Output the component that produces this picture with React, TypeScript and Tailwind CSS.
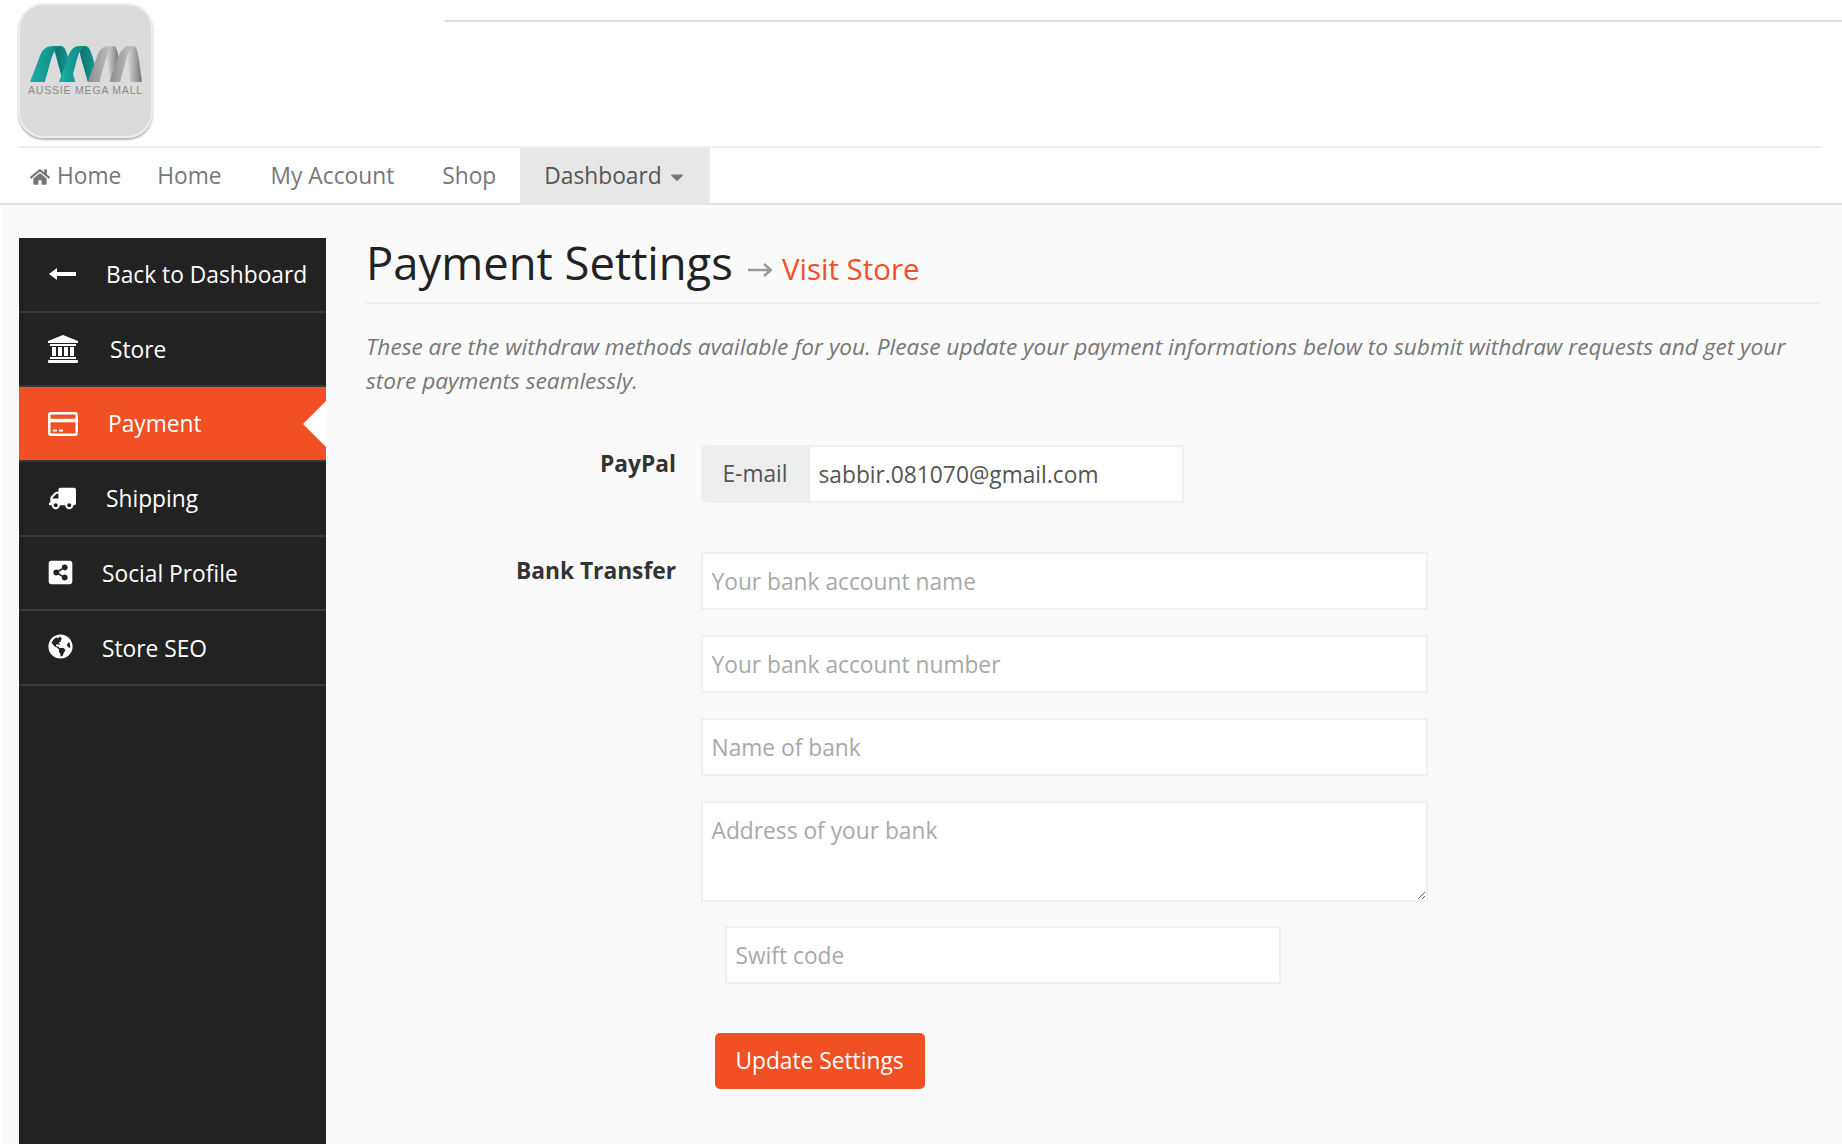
import React from "react";
import {
  FaCaretDown,
  FaGlobeAmericas,
  FaHome,
  FaShareAltSquare,
  FaTruck,
} from "react-icons/fa";

const sans = { fontFamily: '"Open Sans", sans-serif' };

const Logo = () => (
  <div className="w-[135px] h-[135px] rounded-[26px] bg-[#dbdbdb] border-2 border-[#eeeeee] shadow-[0_2px_2px_#b5b5b5] flex flex-col items-center pt-[41px]">
    <svg width="112" height="36" viewBox="0 0 333 107">
      <defs>
        <linearGradient id="teal" x1="0" x2="1" y1="0" y2="0">
          <stop offset="0" stopColor="#1eaea5" />
          <stop offset="1" stopColor="#0b8783" />
        </linearGradient>
        <linearGradient id="tealDark" x1="0" x2="1" y1="0" y2="0">
          <stop offset="0" stopColor="#0a6f6d" />
          <stop offset="1" stopColor="#1aa69e" />
        </linearGradient>
        <linearGradient id="grey" x1="0" x2="1" y1="0" y2="0">
          <stop offset="0" stopColor="#8c8c8c" />
          <stop offset="1" stopColor="#c8c8c8" />
        </linearGradient>
        <linearGradient id="greyDark" x1="0" x2="1" y1="0" y2="0">
          <stop offset="0" stopColor="#ececec" />
          <stop offset="1" stopColor="#757575" />
        </linearGradient>
      </defs>
      <path d="M70 0 H92 C102 0 106 10 112 30 L135 107 H98 L76 25 Z" fill="url(#tealDark)" />
      <path d="M0 107 L30 28 C38 8 50 0 70 0 H92 C78 4 70 18 64 36 L44 107 Z" fill="url(#teal)" />
      <path d="M146 0 H166 C176 2 180 14 186 32 L208 107 H172 L150 30 Z" fill="url(#tealDark)" />
      <path d="M86 107 L112 34 C120 12 130 0 146 0 H166 C152 6 146 20 140 38 L122 107 Z" fill="url(#teal)" />
      <path d="M232 0 H250 C258 4 262 20 264 40 L262 70 C258 90 248 107 240 107 C236 70 228 30 222 12 Z" fill="url(#greyDark)" />
      <path d="M172 107 L198 34 C206 12 216 0 232 0 H250 C238 6 232 20 226 38 L206 107 Z" fill="url(#grey)" />
      <path d="M296 0 H310 C316 2 320 14 324 40 L333 107 H298 C296 70 290 30 282 12 Z" fill="url(#greyDark)" />
      <path d="M236 107 L262 34 C270 12 282 0 296 0 H310 C298 6 292 20 286 38 L268 107 Z" fill="url(#grey)" />
    </svg>
    <span
      className="text-[10.5px] tracking-[0.8px] leading-[16px] text-[#8a8a8a] whitespace-nowrap"
      style={{ fontFamily: '"Liberation Sans", sans-serif' }}
    >
      AUSSIE MEGA MALL
    </span>
  </div>
);

const BackArrow = () => (
  <svg width="27" height="14" viewBox="0 0 27 14" fill="currentColor">
    <path d="M0 7 L8 1 V5 H27 V9 H8 V13 Z" />
  </svg>
);

const BankIcon = () => (
  <svg width="30" height="28" viewBox="0 0 30 28" fill="currentColor">
    <path d="M15 0 L30 6 V8 H0 V6 Z" />
    <rect x="2" y="9" width="26" height="2" />
    <rect x="4" y="12" width="4" height="9" />
    <rect x="10" y="12" width="4" height="9" />
    <rect x="16" y="12" width="4" height="9" />
    <rect x="22" y="12" width="4" height="9" />
    <rect x="2" y="22" width="26" height="2" />
    <rect x="0" y="25" width="30" height="3" rx="1" />
  </svg>
);

const CardIcon = () => (
  <svg width="30" height="24" viewBox="0 0 30 24" fill="none" stroke="currentColor">
    <rect x="1.25" y="1.25" width="27.5" height="21.5" rx="2" strokeWidth="2.5" />
    <path d="M1 8.5 H29" strokeWidth="3.5" />
    <path d="M5 18.5 H9 M11 18.5 H15" strokeWidth="2" />
  </svg>
);

const sideItems = [
  { label: "Back to Dashboard", icon: <BackArrow />, left: 30, gap: 30 },
  { label: "Store", icon: <BankIcon />, left: 29, gap: 32 },
  { label: "Payment", icon: <CardIcon />, left: 29, gap: 30, active: true },
  { label: "Shipping", icon: <FaTruck className="w-[27px] h-[27px] -scale-x-100" />, left: 30, gap: 30 },
  { label: "Social Profile", icon: <FaShareAltSquare className="w-[27px] h-[27px] -translate-y-px" />, left: 28, gap: 28 },
  { label: "Store SEO", icon: <FaGlobeAmericas className="w-[25px] h-[25px] -translate-y-px" />, left: 29, gap: 29 },
];

const Sidebar = () => (
  <aside className="w-[307px] shrink-0 bg-[#222222] text-white h-[906px]">
    <ul>
      {sideItems.map((item) => (
        <li
          key={item.label}
          className={`relative h-[74.7px] flex items-center border-b-2 border-[#383838] text-[22.75px] ${
            item.active ? "bg-[#f15025]" : ""
          }`}
        >
          <span
            className="flex items-center"
            style={{ paddingLeft: item.left, columnGap: item.gap }}
          >
            {item.icon}
            <span className={item.active ? "" : "pt-[2px]"}>{item.label}</span>
          </span>
          {item.active && (
            <span className="absolute right-0 top-[14px] border-y-[23px] border-r-[23px] border-y-transparent border-r-white" />
          )}
        </li>
      ))}
    </ul>
  </aside>
);

const inputClass =
  "block bg-white border-2 border-[#f0f0f0] px-[9px] text-[22.75px] text-[#555555] placeholder:text-[#a9a9a9] outline-none";

export default function App() {
  return (
    <div className="w-[1842px] h-[1144px] overflow-hidden bg-white" style={sans}>
      {/* Header */}
      <header className="h-[205px] border-b-2 border-[#e4e4e4] pl-[18px] pr-[20px]">
        <div className="flex h-[148px] pt-[3px] border-b-2 border-[#efefef]">
          <Logo />
          <div className="flex-1 ml-[292px] mr-[-20px] mt-[17px] h-[2px] bg-[#dddddd]" />
        </div>
        <nav className="flex h-[55px] text-[22.75px] text-[#777777]">
          <a className="flex items-center gap-[7px] pl-[12px] pr-[12px] pt-[2px]">
            <FaHome className="w-[20px] h-[20px]" />
            Home
          </a>
          <a className="flex items-center pl-[24px] pr-[25px] pt-[2px]">Home</a>
          <a className="flex items-center px-[24px] pt-[2px]">My Account</a>
          <a className="flex items-center px-[24px] pt-[2px]">Shop</a>
          <a className="flex items-center gap-[5px] pl-[24px] pr-[23px] pt-[2px] bg-[#e7e7e7] text-[#555555]">
            Dashboard
            <FaCaretDown className="w-[20px] h-[20px] text-[#777777]" />
          </a>
        </nav>
      </header>

      {/* Body */}
      <div className="ml-[2px] h-[939px] bg-[#fafafa] flex pl-[17px] pt-[33px] overflow-hidden">
        <Sidebar />

        <main className="flex-1 pl-[40px] pr-[22px]">
          <div className="flex items-baseline h-[66px] border-b-2 border-[#eeeeee]">
            <h1 className="text-[45.4px] leading-[49px] text-[#222222]">Payment Settings</h1>
            <svg
              width="24"
              height="14"
              viewBox="0 0 24 14"
              fill="none"
              stroke="#999999"
              strokeWidth="2.5"
              className="ml-[15px] self-center mt-[-1px]"
            >
              <path d="M0 7 H22 M16 1 L23 7 L16 13" />
            </svg>
            <a className="ml-[10px] text-[29.5px] text-[#f15025]">Visit Store</a>
          </div>

          <p className="mt-[26px] text-[22.68px] leading-[34px] italic text-[#777777]">
            These are the withdraw methods available for you. Please update your payment informations below to submit withdraw requests and get your store payments seamlessly.
          </p>

          {/* PayPal */}
          <div className="flex mt-[47px]">
            <label className="w-[310px] pt-[2px] shrink-0 text-right text-[22.75px] font-bold text-[#333333] leading-[34px]">
              PayPal
            </label>
            <div className="ml-[24.5px] flex w-[483px] h-[58px]">
              <span className="w-[109px] flex items-center justify-center bg-[#eeeeee] rounded-l-[5px] text-[22.75px] text-[#555555]">
                E-mail
              </span>
              <input
                className={`${inputClass} flex-1 min-w-0 h-full border-l-0`}
                defaultValue="sabbir.081070@gmail.com"
              />
            </div>
          </div>

          {/* Bank */}
          <div className="flex mt-[49px]">
            <label className="w-[310px] pt-[2px] shrink-0 text-right text-[22.75px] font-bold text-[#333333] leading-[34px]">
              Bank Transfer
            </label>
            <div className="ml-[24.5px] w-[727px]">
              <input className={`${inputClass} w-full h-[58px]`} placeholder="Your bank account name" />
              <input className={`${inputClass} w-full h-[58px] mt-[25px]`} placeholder="Your bank account number" />
              <input className={`${inputClass} w-full h-[58px] mt-[25px]`} placeholder="Name of bank" />
              <textarea
                className={`${inputClass} w-full h-[101px] mt-[25px] pt-[12px] leading-[32px]`}
                placeholder="Address of your bank"
              />
              <input className={`${inputClass} w-[556px] h-[58px] mt-[24px] ml-[24px]`} placeholder="Swift code" />
              <button className="block ml-[14px] mt-[49px] w-[210px] h-[56px] rounded-[5px] bg-[#f15025] text-white text-[22.75px]">
                Update Settings
              </button>
            </div>
          </div>
        </main>
      </div>
    </div>
  );
}
